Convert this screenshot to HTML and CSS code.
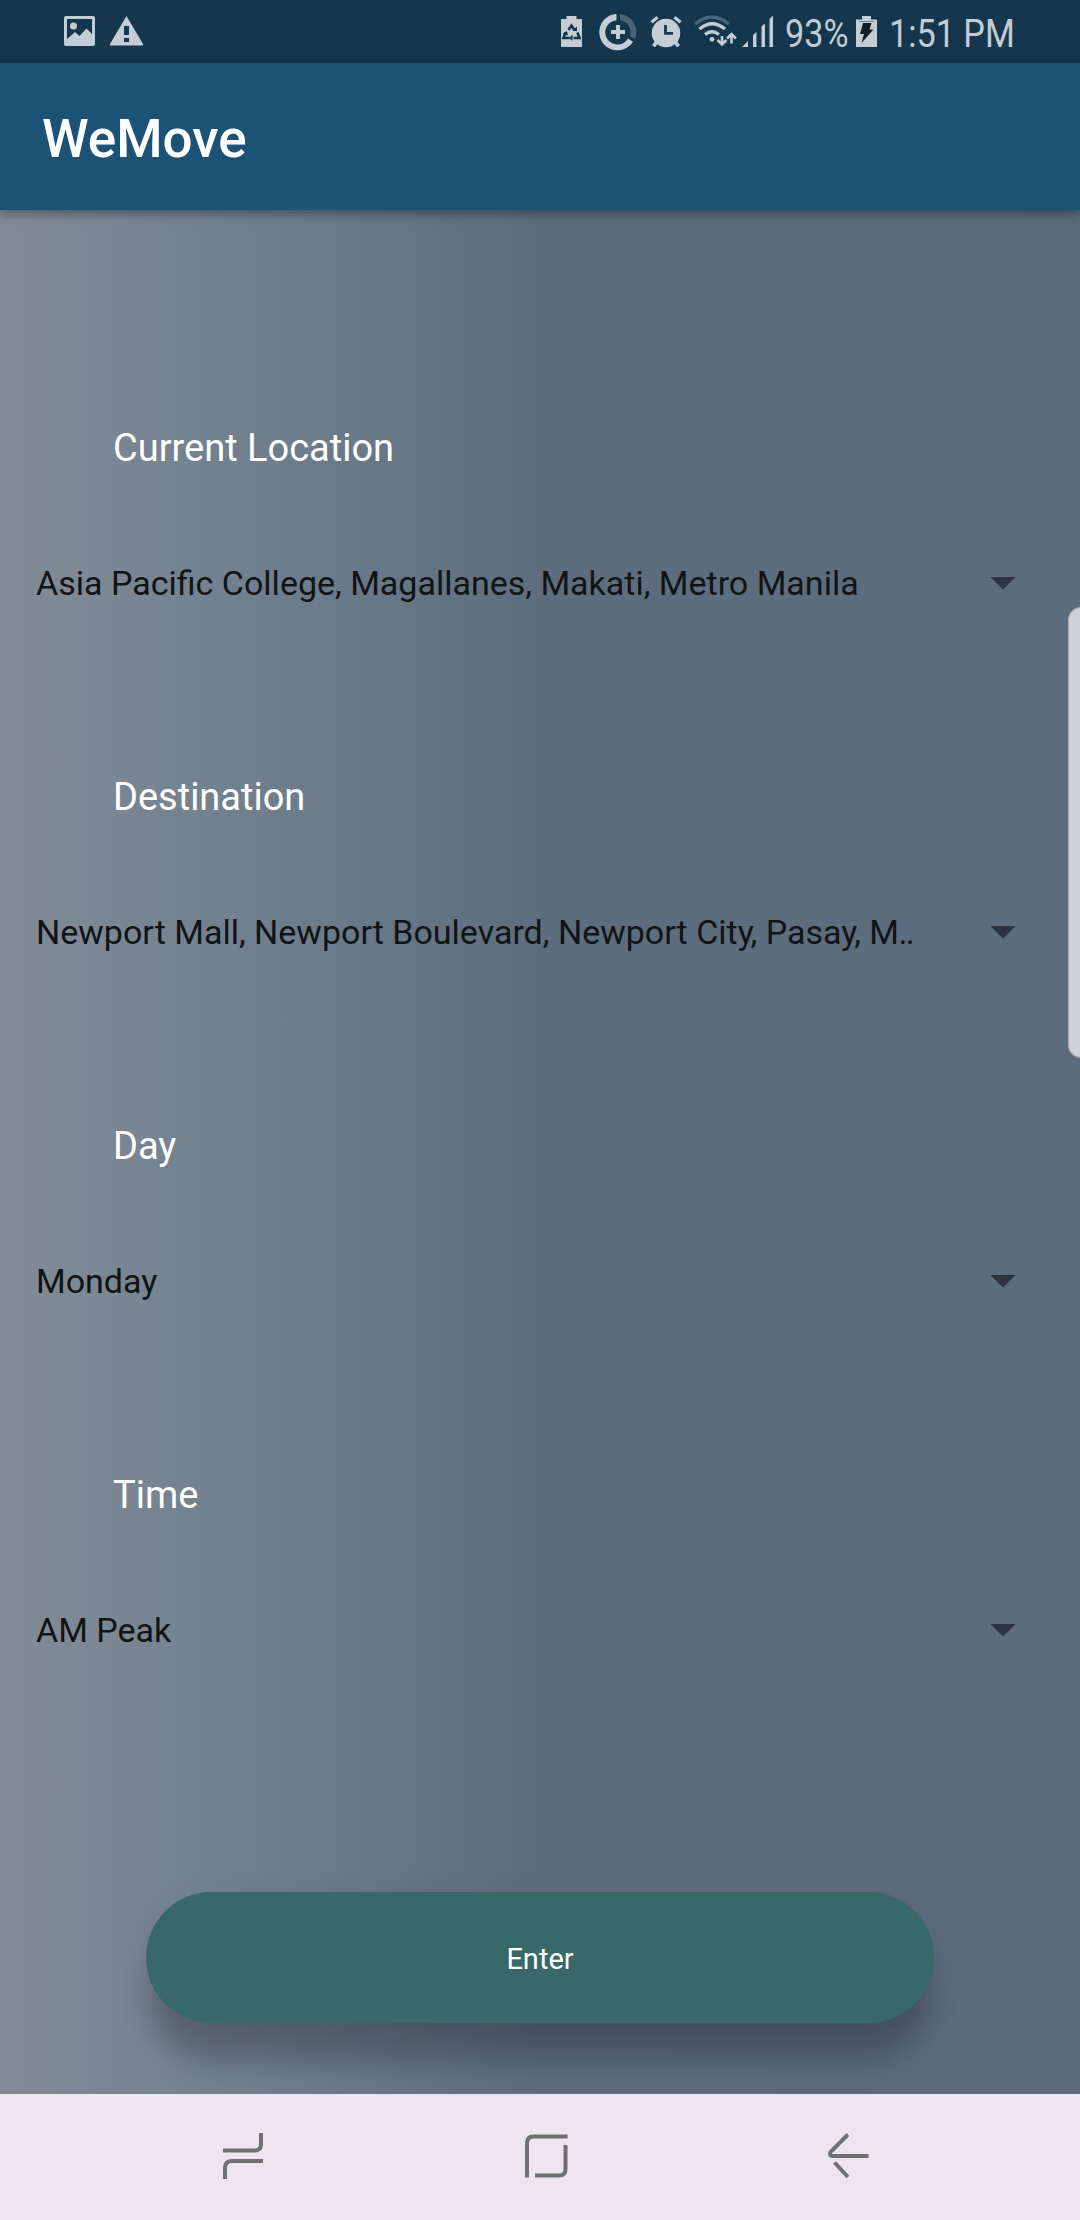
FILE: index.html
```html
<!DOCTYPE html>
<html lang="en">
<head>
<meta charset="utf-8">
<title>WeMove</title>
<link rel="stylesheet" href="styles.css">
</head>
<body>
<div class="screen">
  <header class="status">
    <svg class="status-icons-left" width="84" height="63" viewBox="62 0 84 63">
      <path fill="#c5cdd4" fill-rule="evenodd" d="M66 16h27a2 2 0 0 1 2 2v26a2 2 0 0 1-2 2H66a2 2 0 0 1-2-2V18a2 2 0 0 1 2-2zM67 19v20l8-7 4.500 4 7-7.500L92 34V19z"/>
      <circle cx="73.500" cy="26" r="3.500" fill="#c5cdd4"/>
      <path fill="#c5cdd4" fill-rule="evenodd" d="M126.500 16L110 44q-.5 1.500 1 1.500h31q1.500 0 1-1.500zM124 26h5v9h-5zM124 38h5v4h-5z"/>
    </svg>
    <svg class="status-icons-right" width="220" height="63" viewBox="556 0 220 63">
      <g fill="#c5cdd4">
        <path d="M566.500 16h10v3H582v28h-21V19h5.500z"/>
        <path d="M616.500 14v6.200A12.200 12.200 0 1 0 628 38.500l5 3.200A18.200 18.200 0 1 1 616.500 14z"/>
        <path d="M620 14a18.200 18.200 0 0 1 15 25l-5-2.800A12.200 12.200 0 0 0 620 20.200z" fill="#4a6578"/>
        <path d="M616 25h4v5h5v4h-5v5h-4v-5h-5v-4h5z"/>
        <circle cx="666" cy="33" r="14.300"/>
        <path d="M650.500 21l6-5 2 2.500-6 5zM681.500 21l-6-5-2 2.500 6 5zM655 41l3 2.500-3 3.700-3-2zM677 41l-3 2.500 3 3.700 3-2z"/>
      </g>
      <path d="M665.500 25v8.300h7.500" fill="none" stroke="#14374e" stroke-width="2.800"/>
      <g fill="none" stroke="#14374e" stroke-width="2.600">
        <path d="M568.500 30l3-4.500 3 4.500M565.500 32.500l-2 5.500h6M577.500 32.500l2 5.500h-6"/>
      </g>
      <path fill="#14374e" d="M572 31h5v-4.500zM572.500 34.500v6.500l-3.500-3zM563 33.500l4-2.500 1 4.500z"/>
      <g fill="none" stroke="#c5cdd4" stroke-width="3.200">
        <path d="M695 24Q712 10 729 24" stroke="#4a6578"/>
        <path d="M699.500 29Q712 18.500 725 29"/>
        <path d="M705 34.500Q712 29 719 34.500"/>
        <path d="M722 36v8M717.500 40l4.500 4.500 4.500-4.500" stroke-width="2.600"/>
        <path d="M731.500 43.500v-9M727 38.500l4.500-4.500 4.500 4.500" stroke-width="2.600"/>
      </g>
      <circle cx="712" cy="39.300" r="2.400" fill="#c5cdd4"/>
      <path fill="#c5cdd4" d="M742 47l6-6v6zM753 35l3.500-3v15H753zM761.500 26.500L765 23.500V47h-3.500zM769.500 19l3.500-3.500V47h-3.500z"/>
    </svg>
    <div class="percent"><span>93%</span></div>
    <svg class="battery" width="22" height="63" viewBox="856 0 22 63">
      <path fill="#c5cdd4" d="M862 16h9v3.500h6V47h-21V19.500h6z"/>
      <path stroke="#6f8291" d="M859 21.500h15"/>
      <path fill="#151e28" d="M863 23h8.500l-2 6.500h4L861.500 43l2.500-9h-4z"/>
    </svg>
    <div class="clock"><span>1:51 PM</span></div>
  </header>
  <div class="appbar"><h1>WeMove</h1></div>
  <main class="content">
    <section class="field">
      <div class="label">Current Location</div>
      <div class="select"><span>Asia Pacific College, Magallanes, Makati, Metro Manila</span><i class="caret"></i></div>
    </section>
    <section class="field">
      <div class="label">Destination</div>
      <div class="select"><span>Newport Mall, Newport Boulevard, Newport City<b class="kern">,</b> Pasay<b class="kern">,</b> M<b class="dots">..</b></span><i class="caret"></i></div>
    </section>
    <section class="field">
      <div class="label">Day</div>
      <div class="select"><span>Monday</span><i class="caret"></i></div>
    </section>
    <section class="field">
      <div class="label">Time</div>
      <div class="select"><span>AM Peak</span><i class="caret"></i></div>
    </section>
    <button class="enter">Enter</button>
  </main>
  <nav class="navbar">
    <svg width="44" height="126" viewBox="221 2094 44 126"><path d="M261 2133v11q0 6.500-6.500 6.500H223M225 2179v-11q0-7 7-7H263"/></svg>
    <svg width="44" height="126" viewBox="523 2094 44 126"><path d="M526 2177.500V2143q0-6.500 6.500-6.500H566.500M564.500 2145v24q0 6.500-6.500 6.500H534"/></svg>
    <svg width="44" height="126" viewBox="826 2094 44 126"><path d="M848 2134.500L830.500 2152q-1.500 4 2 4H868.500M834.500 2162.500L848 2177"/></svg>
  </nav>
  <div class="edge-handle"></div>
</div>
</body>
</html>
```
FILE: styles.css
```css
* { box-sizing: border-box; }
body { margin: 0; font-family: Roboto, sans-serif; }
.screen {
  position: relative;
  display: flex;
  flex-direction: column;
  width: 1080px;
  height: 2220px;
  overflow: hidden;
}
svg { display: block; flex: none; }
.status {
  display: flex;
  height: 63px;
  padding-left: 62px;
  background: #14374e;
  color: #c5cdd4;
  font-size: 39.500px;
  line-height: 67px;
  white-space: nowrap;
}
.status-icons-right { margin-left: 410px; }
.percent { width: 71px; margin-left: 9px; }
.clock { width: 130px; margin-left: 11px; }
.percent span, .clock span {
  display: inline-block;
  transform: scaleX(.865);
  transform-origin: left;
}
.appbar {
  z-index: 1;
  display: flex;
  align-items: center;
  height: 147px;
  padding-left: 42px;
  background: #1b5275;
  box-shadow: 0 4px 10px rgba(0, 0, 0, .36);
}
h1 {
  margin: 5px 0 0;
  color: #fff;
  font-size: 53px;
  font-weight: 500;
  line-height: 62px;
}
.content {
  display: flex;
  flex-direction: column;
  height: 1884px;
  padding-top: 215px;
  background: linear-gradient(90deg, #828c95 0, #748290 200px, #5e6d7d 540px, #5d6c7c 100%);
}
.field { height: 349px; }
.label {
  padding-left: 113px;
  color: #fff;
  font-size: 38px;
  line-height: 46px;
}
.select {
  display: flex;
  align-items: center;
  justify-content: space-between;
  margin-top: 92px;
  padding: 0 64px 0 36px;
  color: #101416;
  font-size: 34px;
  line-height: 40px;
  white-space: nowrap;
}
.kern { margin-left: -3.200px; font-weight: 400; }
.dots { margin-left: -.5px; font-weight: 400; letter-spacing: -1.800px; }
.caret {
  width: 26px;
  height: 13px;
  background: #2b3440;
  clip-path: polygon(0 0, 100% 0, 50% 100%);
}
.enter {
  align-self: center;
  width: 788px;
  height: 131px;
  margin-top: 71px;
  padding: 2px 0 0;
  border: 0;
  border-radius: 66px;
  background: #386867;
  box-shadow: 0 44px 30px -4px rgba(0, 0, 0, .2), 0 10px 36px rgba(0, 0, 0, .1);
  color: #fff;
  font: 29px Roboto, sans-serif;
}
.navbar {
  z-index: 1;
  display: flex;
  height: 126px;
  padding-left: 221px;
  gap: 258.500px;
  background: #f0e5ee;
}
.navbar path { fill: none; stroke: #707070; stroke-width: 4; }
.edge-handle {
  position: absolute;
  top: 607px;
  right: -1px;
  width: 13px;
  height: 451px;
  border: 1px solid #a5aab0;
  border-right: 0;
  border-radius: 15px 0 0 15px;
  background: #cdd0d4;
}
```
